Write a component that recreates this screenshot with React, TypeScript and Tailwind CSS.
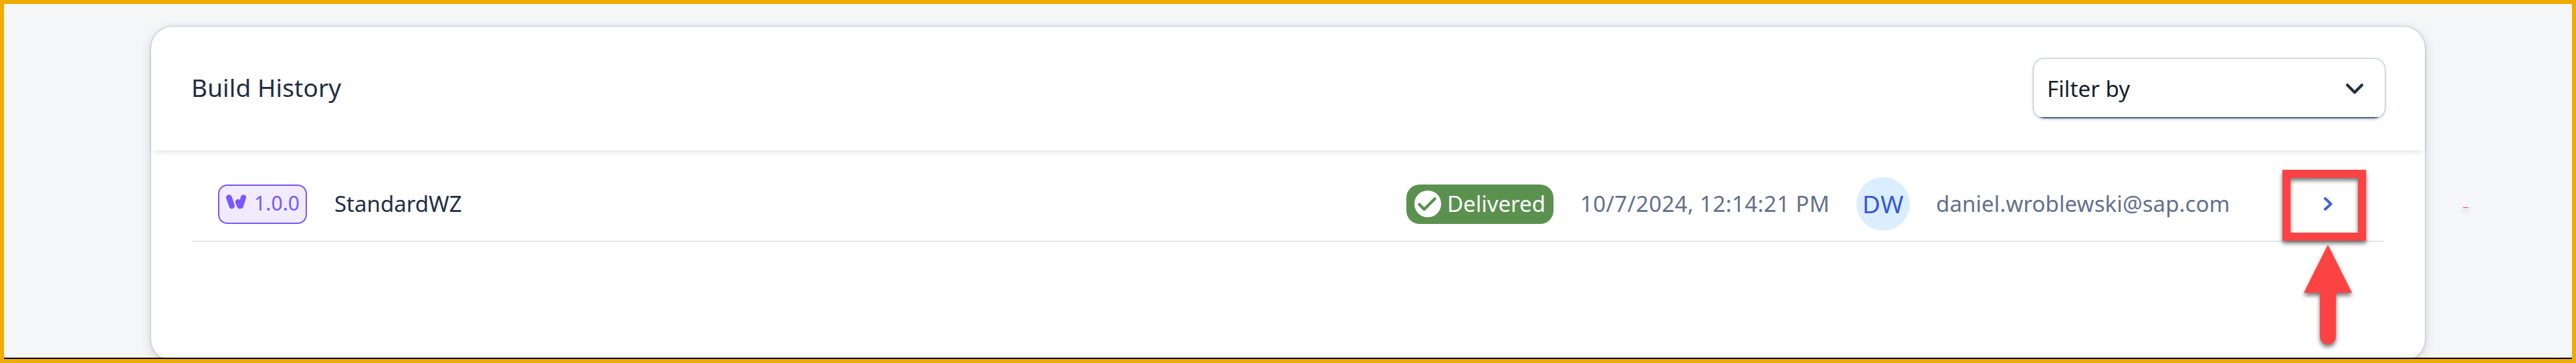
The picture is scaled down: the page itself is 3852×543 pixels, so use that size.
function BuildMark() {
  return (
    <svg className="h-[22px] w-[30px] -translate-y-[3px]" viewBox="0 0 30 22" fill="none" stroke="#7858ff" strokeLinecap="round" strokeLinejoin="round">
      <path d="M4.4 4.5 8.8 17" strokeWidth="8.6" />
      <path d="M18 11.2 20.4 17" strokeWidth="8.4" />
      <path d="M26 4.3 22 17" strokeWidth="8" />
    </svg>
  );
}

function CheckBadge() {
  return (
    <svg className="size-10" viewBox="0 0 40 40" fill="none">
      <circle cx="20" cy="20" r="20" fill="#fff" />
      <path d="M7.4 20.8 14.7 28.2 30.5 12.3" stroke="#5b914f" strokeWidth="4.4" strokeLinecap="round" strokeLinejoin="round" />
    </svg>
  );
}

function FilterSelect() {
  return (
    <button className="relative flex h-[89px] w-[525px] items-center justify-between rounded-[16px] bg-white pr-[32px] pl-[20px] text-left shadow-[0_0_2px_1px_rgba(85,107,129,0.36),0_1px_5px_rgba(85,107,129,0.3)]">
      <span className="absolute inset-0 overflow-hidden rounded-[16px]">
        <span className="absolute inset-x-0 bottom-0 h-[2px] bg-[#5a6b86]" />
      </span>
      <span className="text-[33px] leading-10 tracking-[0.1px] text-[#131e29]">Filter by</span>
      <svg className="h-4 w-[26px]" viewBox="0 0 26 16" fill="none">
        <path d="M2.2 2.2 13 13.2 23.8 2.2" stroke="#232e43" strokeWidth="4.2" strokeLinecap="round" strokeLinejoin="round" />
      </svg>
    </button>
  );
}

function BuildRow() {
  return (
    <div className="mx-[60px] mt-[25px] flex h-[112px] items-center border-b-2 border-[#e5e5e5] pl-10 text-[33px] leading-10 whitespace-nowrap">
      <span className="flex h-[59px] w-[133px] items-center rounded-[14px] border-2 border-[#7858ff] bg-[#f0ebff] pl-[10px] text-[30px] tracking-[0.1px] text-[#7858ff]">
        <BuildMark />
        <span className="ml-3 -translate-y-px">1.0.0</span>
      </span>
      <span className="ml-[41px] text-[#232e43]">StandardWZ</span>
      <span className="ml-auto flex h-[59px] w-[220px] items-center rounded-[20px] bg-[#5b914f] pl-3 text-white">
        <CheckBadge />
        <span className="ml-[9px]">Delivered</span>
      </span>
      <span className="ml-10 w-[413px] tracking-[0.43px] text-[#63708c]">10/7/2024, 12:14:21 PM</span>
      <span className="flex size-20 items-center justify-center rounded-full bg-[#dbeeff] text-[37px] tracking-[0.8px] text-[#3659d6]">DW</span>
      <span className="ml-[39px] w-[580px] tracking-[0.1px] text-[#63708c]">daniel.wroblewski@sap.com</span>
      <svg className="mr-[78px] h-5 w-[13px] shrink-0" viewBox="0 0 13 20" fill="none">
        <path d="M2 2 10.5 10 2 18" stroke="#3d63dc" strokeWidth="4" strokeLinecap="round" strokeLinejoin="round" />
      </svg>
    </div>
  );
}

function Callout() {
  return (
    <svg className="pointer-events-none absolute top-[228px] left-[3387px] h-[300px] w-[320px]" viewBox="3393 234 320 300">
      <g className="drop-shadow-[0_4px_3px_rgba(0,0,0,0.55)]">
        <path d="M3419 260H3532V354H3419Z" fill="none" stroke="#fc4343" strokeWidth="12" />
        <path d="M3481 366 3517 438H3493V503A12 12 0 0 1 3469 503V438H3445Z" fill="#fc4343" />
        <path d="M3683 310H3691V311H3683Z" fill="#fc4343" />
      </g>
    </svg>
  );
}

export default function App() {
  return (
    <div className="relative h-[543px] w-[3852px] overflow-hidden border-6 border-[#f0ab00] bg-[#f5f6f8] font-['Noto_Sans',sans-serif]">
      <div className="flex h-[531px] flex-col overflow-hidden border-b-2 border-black pt-[34px]">
        <section className="mx-[220px] h-[499px] w-[3400px] shrink-0 rounded-[32px] bg-white shadow-[0_0_3px_rgba(34,53,90,0.35),0_4px_16px_rgba(34,53,90,0.2)]">
          <header className="flex h-[185px] items-center justify-between rounded-t-[32px] px-[60px] shadow-[0_7px_8px_-4px_rgba(34,53,72,0.13)]">
            <h2 className="mb-[3px] text-[37px] leading-12 tracking-[0.1px] text-[#232e43]">Build History</h2>
            <FilterSelect />
          </header>
          <BuildRow />
        </section>
      </div>
      <Callout />
    </div>
  );
}
